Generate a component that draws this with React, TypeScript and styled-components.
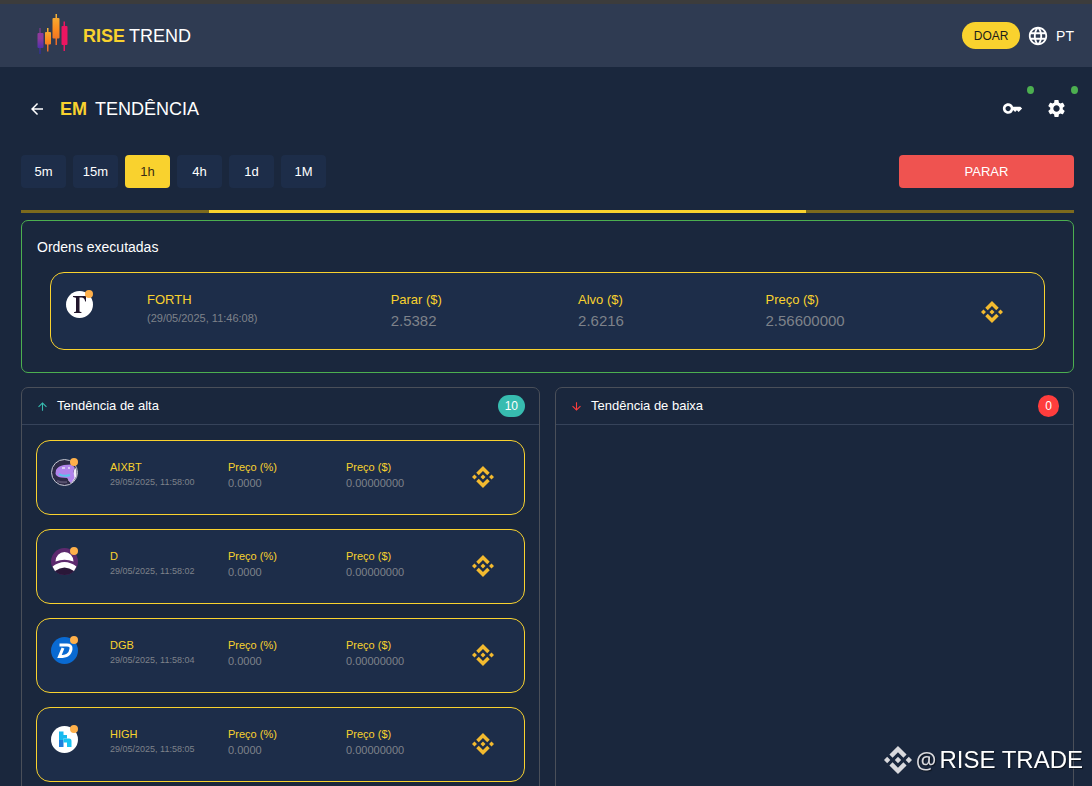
import React from "react";
import styled, { createGlobalStyle } from "styled-components";
import {
  MdArrowBack,
  MdArrowDownward,
  MdArrowUpward,
  MdKey,
  MdLanguage,
  MdSettings,
} from "react-icons/md";

const color = {
  page: "#1a273d",
  header: "#2f3b52",
  card: "#1d2d49",
  yellow: "#f9d22e",
  brand: "#f3ba2f",
  green: "#4caf50",
  red: "#ef5350",
  teal: "#37bcb0",
  muted: "#7e828a",
  line: "#4a4f59",
};

const GlobalStyle = createGlobalStyle`
  *, *::before, *::after { box-sizing: border-box; }
  html { scrollbar-width: none; }
  body {
    margin: 0;
    background: ${color.page};
    color: #fff;
    font-family: "Liberation Sans", Arial, Helvetica, sans-serif;
    font-size: 13px;
    line-height: 16px;
  }
  button { font: inherit; border: 0; cursor: pointer; padding: 0; }
  h1, h2, p { margin: 0; font-weight: 400; }
`;

const Header = styled.header`
  display: flex;
  align-items: center;
  justify-content: space-between;
  height: 67px;
  padding: 0 18px 0 37px;
  border-top: 4px solid #3c3c3c;
  background: ${color.header};
`;

const Brand = styled.a`
  display: flex;
  align-items: center;
  gap: 14px;
  color: #fff;
  text-decoration: none;
`;

const Wordmark = styled.span`
  display: flex;
  gap: 4px;
  font-size: 18px;
  line-height: 22px;
`;

const Strong = styled.b`
  color: ${color.yellow};
`;

const HeaderActions = styled.div`
  display: flex;
  align-items: center;
`;

const DonateButton = styled.button`
  width: 58px;
  height: 27px;
  margin-right: 7px;
  border-radius: 14px;
  background: ${color.yellow};
  color: #1c1c1c;
  font-size: 12px;
`;

const LanguageButton = styled.button`
  display: flex;
  align-items: center;
  gap: 7px;
  background: none;
  color: #fff;
  font-size: 14px;
`;

const Main = styled.main`
  padding: 24px 18px 16px 21px;
`;

const TitleRow = styled.div`
  display: flex;
  align-items: center;
  justify-content: space-between;
  height: 35px;
`;

const TitleGroup = styled.div`
  display: flex;
  align-items: center;
  gap: 14px;
  padding-left: 7px;
`;

const BackButton = styled.button`
  display: flex;
  background: none;
  color: #fff;
`;

const PageTitle = styled.h1`
  display: flex;
  gap: 8px;
  font-size: 18px;
  line-height: 22px;
`;

const IconRow = styled.div`
  display: flex;
  gap: 9px;
`;

const IconButton = styled.button`
  position: relative;
  display: grid;
  place-items: center;
  width: 35px;
  height: 35px;
  background: none;
  color: #fff;

  &::after {
    content: "";
    position: absolute;
    top: -5px;
    right: -4px;
    width: 7px;
    height: 8px;
    border-radius: 50%;
    background: ${color.green};
  }
`;

const Controls = styled.div`
  display: flex;
  justify-content: space-between;
  margin: 29px 0 22px;
`;

const Intervals = styled.div`
  display: flex;
  gap: 7px;
`;

const IntervalButton = styled.button<{ $active: boolean }>`
  width: 45px;
  height: 33px;
  border-radius: 4px;
  background: ${(p) => (p.$active ? color.yellow : color.card)};
  color: ${(p) => (p.$active ? "#3a2c14" : "#fff")};
`;

const StopButton = styled.button`
  width: 175px;
  height: 33px;
  border-radius: 4px;
  background: ${color.red};
  color: #fff;
`;

const ProgressTrack = styled.div`
  height: 3px;
  margin-bottom: 7px;
  padding-left: 17.85%;
  background: #7d6a1d;
`;

const ProgressBar = styled.div`
  width: 69%;
  height: 3px;
  background: ${color.yellow};
`;

const OrdersPanel = styled.section`
  padding: 16px 28px 22px;
  border: 1px solid ${color.green};
  border-radius: 7px;
`;

const OrdersTitle = styled.h2`
  margin: 0 -13px 15px;
  font-size: 14px;
  line-height: 20px;
`;

const OrderCard = styled.article`
  display: grid;
  grid-template-columns: 81px 26fr 20fr 20fr 23fr 48px;
  height: 78px;
  padding: 18px 15px 20px;
  border: 1px solid ${color.yellow};
  border-radius: 14px;
  background: ${color.card};
`;

const TrendCard = styled.article`
  display: grid;
  grid-template-columns: 59px 118fr 118fr 126fr 38px;
  height: 75px;
  padding: 18px 14px 20px;
  border: 1px solid ${color.yellow};
  border-radius: 14px;
  background: ${color.card};
`;

const Coin = styled.div`
  position: relative;
  width: 27px;
  height: 27px;

  &::after {
    content: "";
    position: absolute;
    top: -1px;
    right: 0;
    width: 8px;
    height: 8px;
    border-radius: 50%;
    background: #ffb04a;
  }

  svg { display: block; }
`;

const Label = styled.p<{ $large?: boolean }>`
  color: ${color.yellow};
  font-size: ${(p) => (p.$large ? 13 : 11)}px;
  line-height: ${(p) => (p.$large ? 18 : 16)}px;
`;

const Value = styled.p<{ $large?: boolean }>`
  color: ${color.muted};
  font-size: ${(p) => (p.$large ? 15 : 11)}px;
  line-height: ${(p) => (p.$large ? 24 : 16)}px;
`;

const Time = styled.p<{ $large?: boolean }>`
  color: ${color.muted};
  font-size: ${(p) => (p.$large ? 11 : 9)}px;
  line-height: ${(p) => (p.$large ? 18 : 14)}px;
`;

const MarketLink = styled.a`
  align-self: center;
  height: 22px;
  color: ${color.brand};
`;

const Columns = styled.div`
  display: grid;
  grid-template-columns: 1fr 1fr;
  gap: 15px;
  margin-top: 14px;
`;

const TrendPanel = styled.section`
  border: 1px solid ${color.line};
  border-radius: 7px;
`;

const TrendHeader = styled.header`
  display: flex;
  align-items: center;
  gap: 8px;
  height: 37px;
  padding: 0 14px;
  border-bottom: 1px solid #36435a;
`;

const TrendTitle = styled.h2`
  flex: 1;
  font-size: 13px;
`;

const Count = styled.span<{ $tone: string }>`
  padding: 0 7px;
  border-radius: 11px;
  background: ${(p) => p.$tone};
  font-size: 12px;
  line-height: 22px;
`;

const TrendList = styled.div`
  display: grid;
  gap: 14px;
  padding: 15px 14px 14px;
`;

const Watermark = styled.div`
  position: fixed;
  right: 9px;
  bottom: 10px;
  display: flex;
  align-items: center;
  color: #fff;
  font-size: 24px;
  line-height: 32px;
  text-shadow: 1px 1px 1px #0008;

  svg { color: #d9d9dd; margin-right: 4px; }
`;

const At = styled.span`
  margin-right: 3px;
  color: #d9d9dd;
  font-family: "Noto Sans", sans-serif;
  font-size: 23px;
`;

const Diamond = ({ size }: { size: number }) => (
  <svg width={size} height={size} viewBox="0 0 24 24" fill="currentColor" aria-hidden="true">
    <path d="M16.624 13.92l2.717 2.716-7.353 7.353-7.353-7.352 2.717-2.717 4.636 4.66 4.636-4.66zm4.637-4.636L24 12l-2.715 2.716L18.568 12l2.693-2.716zm-9.272 0l2.716 2.692-2.717 2.717L9.272 12l2.716-2.715zm-9.273 0L5.41 12l-2.692 2.692L0 12l2.716-2.716zM11.99.01l7.352 7.33-2.717 2.715-4.636-4.636-4.636 4.66-2.717-2.716L11.989.011z" />
  </svg>
);

const CandleLogo = () => (
  <svg width="32" height="44" viewBox="0 0 32 44" aria-hidden="true">
    <defs>
      <linearGradient id="violet" x1="0" y1="0" x2="0" y2="1">
        <stop offset="0.4" stopColor="#8e3a9c" />
        <stop offset="1" stopColor="#2a2bb5" />
      </linearGradient>
      <linearGradient id="amber" x1="0" y1="0" x2="0" y2="1">
        <stop offset="0" stopColor="#f2b63a" />
        <stop offset="0.5" stopColor="#fb8c1e" />
        <stop offset="1" stopColor="#e8672c" />
      </linearGradient>
    </defs>
    <path fill="url(#violet)" d="M2.500 14h1v5h2q1 0 1 1v13q0 1-1 1h-2v6h-1v-6h-1q-1 0-1-1V20q0-1 1-1h1z" />
    <path fill="url(#amber)" d="M10 14h1.500v4h1.500q1 0 1 1v10.500q0 1-1 1h-1.500v7H10v-7H9q-1 0-1-1V19q0-1 1-1h1z" />
    <path fill="url(#amber)" d="M18.500-1H20v5h1.500q1 0 1 1v18.500q0 1-1 1H20v6.500h-1.500v-6.500h-2q-1 0-1-1V5q0-1 1-1h2z" />
    <path fill="#ec1561" d="M26.500 7.500H28V12h1.500q1 0 1 1v17q0 1-1 1H28v6h-1.500v-6h-1q-1 0-1-1V13q0-1 1-1h1z" />
  </svg>
);

const coinArt: Record<string, React.ReactNode> = {
  FORTH: (
    <>
      <circle cx="13.5" cy="13.5" r="13.5" fill="#fff" />
      <path d="M7 5h13v5.500h-.8q-.7-4-3.700-4H13.500V20.500l2 .7v.8H8v-.8l2-.7V6.700L7 5.900z" fill="#21152b" />
    </>
  ),
  AIXBT: (
    <>
      <circle cx="13.5" cy="13.500" r="13" fill="#2d2b47" stroke="#c5c8d2" />
      <path d="M24 8q2.500 5 1 10-2 4-5 6l-3-3 5-6z" fill="#f2eef8" />
      <path d="M5 11q2-4 8-5l7-.5 3.500 2.500-1 5 1 6-3.500 5-4-5-6-.5q-5-1-5.500-4z" fill="#b184ec" />
      <path d="M11 9h3m3 0h2" stroke="#e9e0f8" strokeWidth="1.500" />
      <path d="M8 15q4 3 11 1" stroke="#56c4ec" strokeWidth="2" fill="none" />
      <path d="M6 22q5 2 10 1" stroke="#55506d" strokeWidth="2" fill="none" />
    </>
  ),
  D: (
    <>
      <circle cx="13.5" cy="13.500" r="13.500" fill="#5d2a6e" />
      <path d="M1 18h25q-4 9-12.500 9T1 18z" fill="#2a1738" />
      <path d="M4.500 13.500a9 9.500 0 0 1 18 0q-9-3.500-18 0z" fill="#fff" />
      <path d="M1.500 18.500q12-9 24 0l-2.500 4.500q-9.500-7-19 0z" fill="#fff" />
    </>
  ),
  DGB: (
    <>
      <circle cx="13.5" cy="13.500" r="13.500" fill="#0a6ad2" />
      <path
        d="M8.500 8H16q4.500 0 4 4-.5 4-3.500 6-2 1.500-8 1.500L12 11"
        fill="none"
        stroke="#fff"
        strokeWidth="3"
      />
    </>
  ),
  HIGH: (
    <>
      <circle cx="13.5" cy="13.500" r="13.500" fill="#fff" />
      <path d="M8 5.500h4.500V9H16v3.500h-3.500V14H8z" fill="#17b9ef" />
      <path d="M8 14h4.500v7H8z" fill="#1f7fdc" />
      <path d="M12.500 12.500H18q2.500 0 2.500 2.500v6H16v-4.500h-3.500z" fill="#17c3f3" />
    </>
  ),
};

const CoinIcon = ({ symbol }: { symbol: string }) => (
  <Coin>
    <svg width="27" height="27" viewBox="0 0 27 27" aria-hidden="true">
      {coinArt[symbol]}
    </svg>
  </Coin>
);

const Market = ({ symbol }: { symbol: string }) => (
  <MarketLink href="#" aria-label={`Binance ${symbol}`}>
    <Diamond size={22} />
  </MarketLink>
);

const intervals = ["5m", "15m", "1h", "4h", "1d", "1M"];

const rising = [
  { symbol: "AIXBT", time: "29/05/2025, 11:58:00" },
  { symbol: "D", time: "29/05/2025, 11:58:02" },
  { symbol: "DGB", time: "29/05/2025, 11:58:04" },
  { symbol: "HIGH", time: "29/05/2025, 11:58:05" },
];

const orderFields = [
  ["Parar ($)", "2.5382"],
  ["Alvo ($)", "2.6216"],
  ["Preço ($)", "2.56600000"],
];

export default function App() {
  const [active, setActive] = React.useState("1h");

  return (
    <>
      <GlobalStyle />
      <Header>
        <Brand href="#">
          <CandleLogo />
          <Wordmark>
            <Strong>RISE</Strong>
            <span>TREND</span>
          </Wordmark>
        </Brand>
        <HeaderActions>
          <DonateButton>DOAR</DonateButton>
          <LanguageButton>
            <MdLanguage size={22} />
            PT
          </LanguageButton>
        </HeaderActions>
      </Header>

      <Main>
        <TitleRow>
          <TitleGroup>
            <BackButton aria-label="Voltar">
              <MdArrowBack size={18} />
            </BackButton>
            <PageTitle>
              <Strong>EM</Strong>
              <span>TENDÊNCIA</span>
            </PageTitle>
          </TitleGroup>
          <IconRow>
            <IconButton aria-label="Chave">
              <MdKey size={21} />
            </IconButton>
            <IconButton aria-label="Configurações">
              <MdSettings size={21} />
            </IconButton>
          </IconRow>
        </TitleRow>

        <Controls>
          <Intervals>
            {intervals.map((name) => (
              <IntervalButton
                key={name}
                $active={name === active}
                aria-pressed={name === active}
                onClick={() => setActive(name)}
              >
                {name}
              </IntervalButton>
            ))}
          </Intervals>
          <StopButton>PARAR</StopButton>
        </Controls>

        <ProgressTrack role="progressbar" aria-label="Progresso">
          <ProgressBar />
        </ProgressTrack>

        <OrdersPanel>
          <OrdersTitle>Ordens executadas</OrdersTitle>
          <OrderCard>
            <CoinIcon symbol="FORTH" />
            <div>
              <Label $large>FORTH</Label>
              <Time $large>(29/05/2025, 11:46:08)</Time>
            </div>
            {orderFields.map(([label, value]) => (
              <div key={label}>
                <Label $large>{label}</Label>
                <Value $large>{value}</Value>
              </div>
            ))}
            <Market symbol="FORTH" />
          </OrderCard>
        </OrdersPanel>

        <Columns>
          <TrendPanel>
            <TrendHeader>
              <MdArrowUpward size={13} color={color.teal} />
              <TrendTitle>Tendência de alta</TrendTitle>
              <Count $tone={color.teal}>10</Count>
            </TrendHeader>
            <TrendList>
              {rising.map(({ symbol, time }) => (
                <TrendCard key={symbol}>
                  <CoinIcon symbol={symbol} />
                  <div>
                    <Label>{symbol}</Label>
                    <Time>{time}</Time>
                  </div>
                  <div>
                    <Label>Preço (%)</Label>
                    <Value>0.0000</Value>
                  </div>
                  <div>
                    <Label>Preço ($)</Label>
                    <Value>0.00000000</Value>
                  </div>
                  <Market symbol={symbol} />
                </TrendCard>
              ))}
            </TrendList>
          </TrendPanel>

          <TrendPanel>
            <TrendHeader>
              <MdArrowDownward size={13} color="#ff3d3d" />
              <TrendTitle>Tendência de baixa</TrendTitle>
              <Count $tone="#ff3d3d">0</Count>
            </TrendHeader>
          </TrendPanel>
        </Columns>
      </Main>

      <Watermark>
        <Diamond size={28} />
        <At>@</At>
        <span>RISE TRADE</span>
      </Watermark>
    </>
  );
}
